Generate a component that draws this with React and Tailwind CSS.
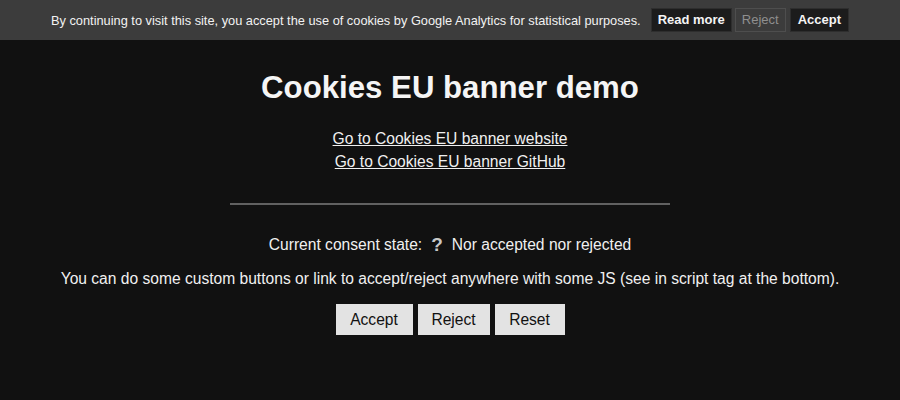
export default function App() {
  const font = { fontFamily: '"Liberation Sans", Arial, sans-serif' };
  return (
    <div className="w-[900px] h-[400px] bg-[#111111] text-[#f0f0f0] overflow-hidden" style={font}>
      <div className="h-[40px] bg-[#3c3c3c] flex items-center justify-center text-[12.8px] text-[#f2f2f2]">
        <span className="mr-[10px] pt-[1px]">By continuing to visit this site, you accept the use of cookies by Google Analytics for statistical purposes.</span>
        <button className="h-[24px] px-[6px] bg-[#1c1c1c] border border-[#2e2e2e] font-bold text-[13px] text-[#f5f5f5] mr-[3px]">Read more</button>
        <button className="h-[24px] px-[6px] bg-[#3c3c3c] border border-[#4e4e4e] text-[13px] text-[#8f8f8f] mr-[4px]">Reject</button>
        <button className="h-[24px] px-[7px] bg-[#1c1c1c] border border-[#2e2e2e] font-bold text-[13px] text-[#f5f5f5]">Accept</button>
      </div>
      <div className="flex flex-col items-center">
        <h1 className="mt-[29px] text-[31.2px] leading-[37px] font-bold text-[#f5f5f5]">Cookies EU banner demo</h1>
        <div className="mt-[21px] flex flex-col items-center text-[15.6px] leading-[23px]">
          <a href="#" className="underline text-[#f0f0f0]">Go to Cookies EU banner website</a>
          <a href="#" className="underline text-[#f0f0f0]">Go to Cookies EU banner GitHub</a>
        </div>
        <div className="mt-[30px] w-[440px] h-[2px] bg-[#616161]"></div>
        <div className="mt-[30px] text-[15.6px] leading-[20px] flex items-center">
          <span>Current consent state:</span>
          <span className="mx-[9px] font-bold text-[19px] text-[#c8c8c8]">?</span>
          <span>Nor accepted nor rejected</span>
        </div>
        <p className="mt-[14px] text-[15.6px] leading-[20px]">You can do some custom buttons or link to accept/reject anywhere with some JS (see in script tag at the bottom).</p>
        <div className="mt-[15px] flex gap-[5px]">
          <button className="h-[31px] w-[77px] bg-[#e3e3e3] text-[#111] text-[15.6px]">Accept</button>
          <button className="h-[31px] w-[72px] bg-[#e3e3e3] text-[#111] text-[15.6px]">Reject</button>
          <button className="h-[31px] w-[70px] bg-[#e3e3e3] text-[#111] text-[15.6px]">Reset</button>
        </div>
      </div>
    </div>
  );
}
